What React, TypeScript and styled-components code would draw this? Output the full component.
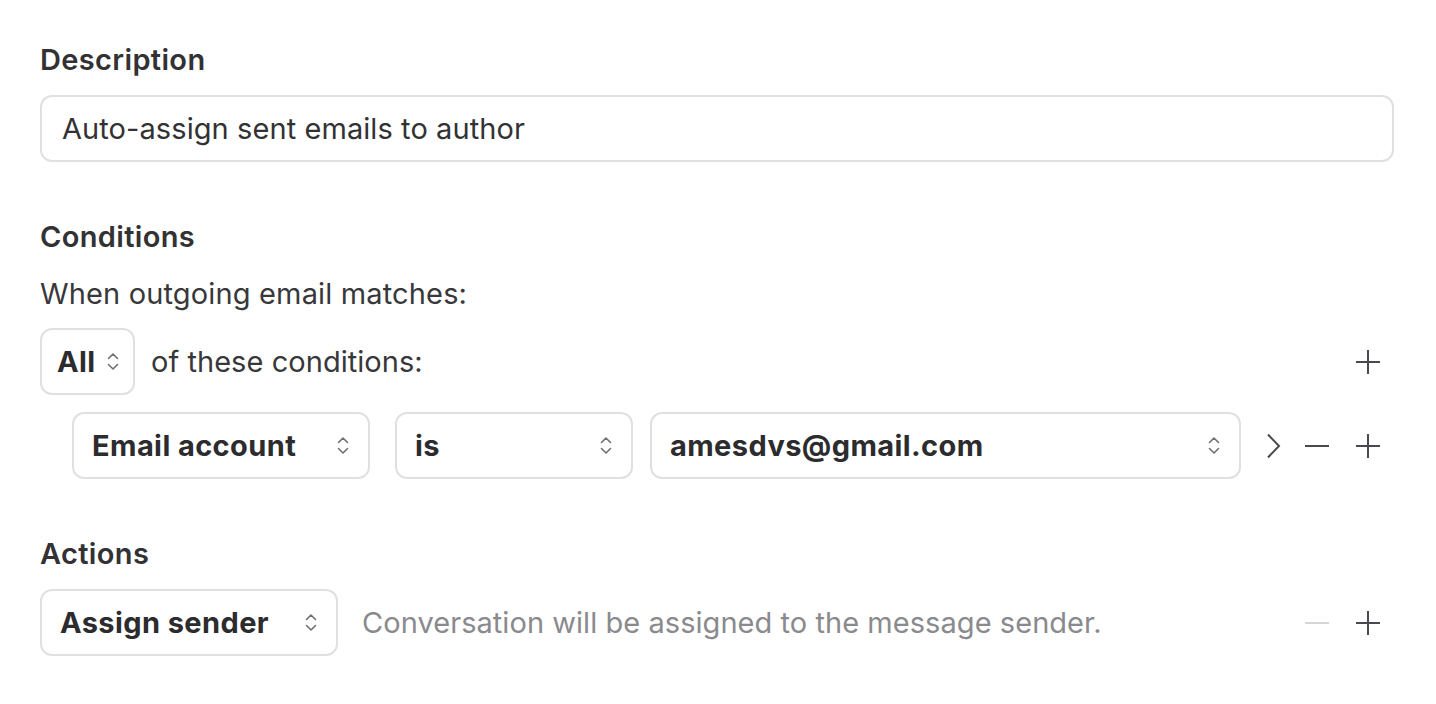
import React from "react";
import styled, { createGlobalStyle } from "styled-components";

const Global = createGlobalStyle`
  html, body { margin: 0; padding: 0; background: #fff; }
  body { font-family: Inter, "Noto Sans", sans-serif; color: #2e2e31; -webkit-font-smoothing: antialiased; }
  * { box-sizing: border-box; }
`;

const Page = styled.div`
  width: 1436px;
  padding: 42px 42px 0 40px;
  display: flex;
  flex-direction: column;
`;

const Section = styled.section<{ $mt?: number }>`
  display: flex;
  flex-direction: column;
  margin-top: ${(p) => p.$mt ?? 0}px;
`;

const Heading = styled.h2`
  margin: 0;
  font-size: 29px;
  line-height: 36px;
  font-weight: 600;
  color: #323235;
  letter-spacing: 0.35px;
`;

const TextInput = styled.div`
  margin-top: 17px;
  height: 67px;
  border: 2px solid #e0e0e2;
  border-radius: 12px;
  display: flex;
  align-items: center;
  padding: 0 20px;
  font-size: 29px;
  letter-spacing: 0.08px;
  color: #323235;
`;

const Lead = styled.div`
  margin-top: 21px;
  font-size: 29px;
  line-height: 36px;
  letter-spacing: 0.15px;
  color: #38383b;
`;

const Row = styled.div<{ $indent?: number; $mt?: number }>`
  display: flex;
  align-items: center;
  padding-left: ${(p) => p.$indent ?? 0}px;
  margin-top: ${(p) => p.$mt ?? 0}px;
`;

const Select = styled.div<{ $w: number; $ml?: number; $pl?: number; $pr?: number }>`
  width: ${(p) => p.$w}px;
  margin-left: ${(p) => p.$ml ?? 0}px;
  height: 67px;
  flex-shrink: 0;
  border: 2px solid #e0e0e2;
  border-radius: 12px;
  display: flex;
  align-items: center;
  justify-content: space-between;
  padding: 0 ${(p) => p.$pr ?? 19}px 0 ${(p) => p.$pl ?? 18}px;
  font-size: 29px;
  font-weight: 700;
  letter-spacing: 0.4px;
  color: #2c2c2f;
`;

const SelectLabel = styled.span`
  white-space: nowrap;
`;

const Inline = styled.span<{ $gray?: boolean; $ml: number }>`
  margin-left: ${(p) => p.$ml}px;
  font-size: 29px;
  letter-spacing: 0.05px;
  color: ${(p) => (p.$gray ? "#8a8a8e" : "#38383b")};
  white-space: nowrap;
`;

const Spacer = styled.div`
  flex: 1;
`;

const IconBtn = styled.span<{ $ml?: number; $mr?: number; $w?: number; $muted?: boolean }>`
  width: ${(p) => p.$w ?? 26}px;
  height: 26px;
  margin-left: ${(p) => p.$ml ?? 0}px;
  margin-right: ${(p) => p.$mr ?? 0}px;
  display: inline-flex;
  align-items: center;
  justify-content: center;
  color: ${(p) => (p.$muted ? "#d6d6d8" : "#4a4a4e")};
  flex-shrink: 0;
`;

const Updown = () => (
  <svg width="12" height="19" viewBox="0 0 12 19" fill="none" stroke="#707074" strokeWidth="1.6" strokeLinecap="round" strokeLinejoin="round">
    <path d="M1.5 6.5 L6 2 L10.5 6.5" />
    <path d="M1.5 12.5 L6 17 L10.5 12.5" />
  </svg>
);

const Plus = () => (
  <svg width="26" height="26" viewBox="0 0 26 26" fill="none" stroke="currentColor" strokeWidth="2">
    <path d="M13 1 V25 M1 13 H25" />
  </svg>
);

const Minus = () => (
  <svg width="26" height="26" viewBox="0 0 26 26" fill="none" stroke="currentColor" strokeWidth="2">
    <path d="M1 13 H25" />
  </svg>
);

const Chevron = () => (
  <svg width="16" height="26" viewBox="0 0 16 26" fill="none" stroke="currentColor" strokeWidth="2" strokeLinejoin="miter">
    <path d="M2 1.5 L13 13 L2 24.5" />
  </svg>
);

export default function App() {
  return (
    <>
      <Global />
      <Page>
        <Section>
          <Heading>Description</Heading>
          <TextInput>Auto-assign sent emails to author</TextInput>
        </Section>

        <Section $mt={57}>
          <Heading>Conditions</Heading>
          <Lead>When outgoing email matches:</Lead>
          <Row $mt={16}>
            <Select $w={95} $pl={15} $pr={14}>
              <SelectLabel>All</SelectLabel>
              <Updown />
            </Select>
            <Inline $ml={16}>of these conditions:</Inline>
            <Spacer />
            <IconBtn $mr={13}>
              <Plus />
            </IconBtn>
          </Row>
          <Row $indent={32} $mt={17}>
            <Select $w={298}>
              <SelectLabel>Email account</SelectLabel>
              <Updown />
            </Select>
            <Select $w={238} $ml={25}>
              <SelectLabel>is</SelectLabel>
              <Updown />
            </Select>
            <Select $w={591} $ml={17}>
              <SelectLabel>amesdvs@gmail.com</SelectLabel>
              <Updown />
            </Select>
            <Spacer />
            <IconBtn $w={16}>
              <Chevron />
            </IconBtn>
            <IconBtn $ml={22}>
              <Minus />
            </IconBtn>
            <IconBtn $ml={25} $mr={13}>
              <Plus />
            </IconBtn>
          </Row>
        </Section>

        <Section $mt={57}>
          <Heading>Actions</Heading>
          <Row $mt={17}>
            <Select $w={298}>
              <SelectLabel>Assign sender</SelectLabel>
              <Updown />
            </Select>
            <Inline $gray $ml={24}>Conversation will be assigned to the message sender.</Inline>
            <Spacer />
            <IconBtn $muted>
              <Minus />
            </IconBtn>
            <IconBtn $ml={25} $mr={13}>
              <Plus />
            </IconBtn>
          </Row>
        </Section>
      </Page>
    </>
  );
}
